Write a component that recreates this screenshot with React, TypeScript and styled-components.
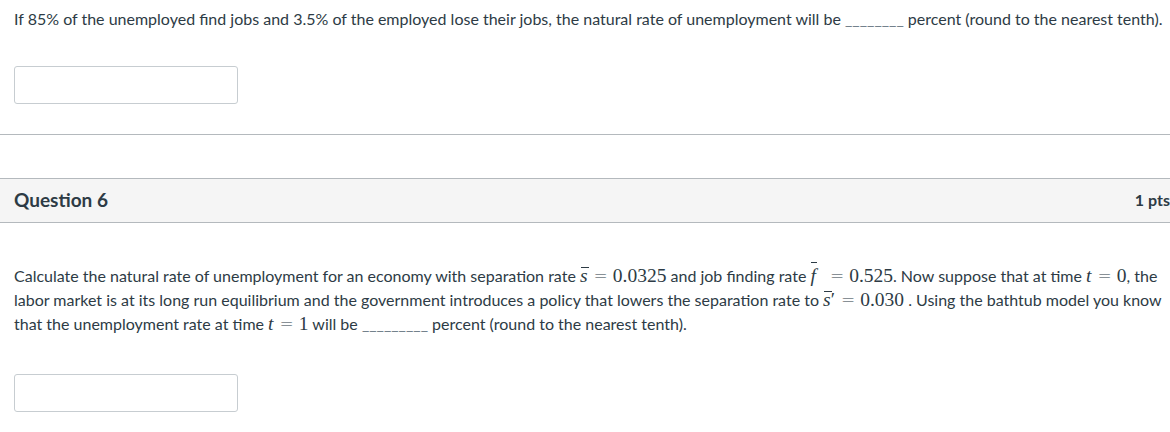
import styled, { createGlobalStyle } from "styled-components";

const GlobalStyle = createGlobalStyle`
  body {
    margin: 0;
    background: #ffffff;
    overflow: hidden;
    font-family: Lato, "Open Sans", sans-serif;
    color: #2d3b45;
  }
`;

const Page = styled.div`
  width: 1184px;
`;

const Block = styled.div`
  padding: 0 14px;
`;

const Text = styled.p<{ $top?: number }>`
  margin: 0;
  padding-top: ${(p) => p.$top ?? 0}px;
  font-size: 16px;
  line-height: 24px;
`;

const Blank = styled.span`
  color: #73818c;
`;

const AnswerInput = styled.input<{ $top: number }>`
  display: block;
  box-sizing: border-box;
  margin-top: ${(p) => p.$top}px;
  width: 224px;
  height: 38px;
  border: 1px solid #c7cdd1;
  border-radius: 3px;
  background: #fff;
  outline: none;
`;

const Rule = styled.hr`
  margin: 30px 0 0;
  border: 0;
  border-top: 1px solid #b4b9bd;
`;

const QuestionHeader = styled.div`
  margin-top: 43px;
  height: 45px;
  box-sizing: border-box;
  display: flex;
  align-items: center;
  justify-content: space-between;
  padding: 0 14px 2px;
  background: #f5f5f5;
  border-top: 1px solid #b4b9bd;
  border-bottom: 1px solid #b4b9bd;
`;

const QuestionName = styled.span`
  font-size: 19px;
  font-weight: 700;
  color: #2d3b45;
`;

const Points = styled.span`
  font-size: 16px;
  font-weight: 700;
  color: #2d3b45;
`;

const Math = styled.span`
  font-family: "Liberation Serif", "DejaVu Serif", serif;
  font-size: 19.5px;
  line-height: 1;
  white-space: nowrap;
`;

const Var = styled.span<{ $bar?: "low" | "high" }>`
  position: relative;
  font-style: italic;
  &::after {
    content: "";
    display: ${(p) => (p.$bar ? "block" : "none")};
    position: absolute;
    left: 1px;
    right: -1px;
    top: ${(p) => (p.$bar === "high" ? "-3px" : "2px")};
    border-top: 1px solid #2d3b45;
  }
`;

const Op = styled.span<{ $wide?: boolean }>`
  font-family: "DejaVu Sans", sans-serif;
  font-weight: 300;
  font-size: 17px;
  margin: 0 5px 0 ${(p) => (p.$wide ? 14 : 6)}px;
`;

export default function App() {
  return (
    <Page>
      <GlobalStyle />
      <Block>
        <Text $top={7}>
          If 85% of the unemployed find jobs and 3.5% of the employed lose their jobs, the natural rate of
          unemployment will be <Blank>________</Blank> percent (round to the nearest tenth).
        </Text>
        <AnswerInput $top={35} type="text" />
      </Block>
      <Rule />
      <QuestionHeader>
        <QuestionName>Question 6</QuestionName>
        <Points>1 pts</Points>
      </QuestionHeader>
      <Block>
        <Text $top={41}>
          Calculate the natural rate of unemployment for an economy with separation rate{" "}
          <Math>
            <Var $bar="low">s</Var>
            <Op>=</Op>0.0325
          </Math>{" "}
          and job finding rate{" "}
          <Math>
            <Var $bar="high">f</Var>
            <Op $wide>=</Op>0.525
          </Math>
          . Now suppose that at time{" "}
          <Math>
            <Var>t</Var>
            <Op>=</Op>0
          </Math>
          , the labor market is at its long run equilibrium and the government introduces a policy that lowers the
          separation rate to{" "}
          <Math>
            <Var $bar="low">s</Var>′<Op>=</Op>0.030
          </Math>{" "}
          . Using the bathtub model you know that the unemployment rate at time{" "}
          <Math>
            <Var>t</Var>
            <Op>=</Op>1
          </Math>{" "}
          will be <Blank>_________</Blank> percent (round to the nearest tenth).
        </Text>
        <AnswerInput $top={38} type="text" />
      </Block>
    </Page>
  );
}
